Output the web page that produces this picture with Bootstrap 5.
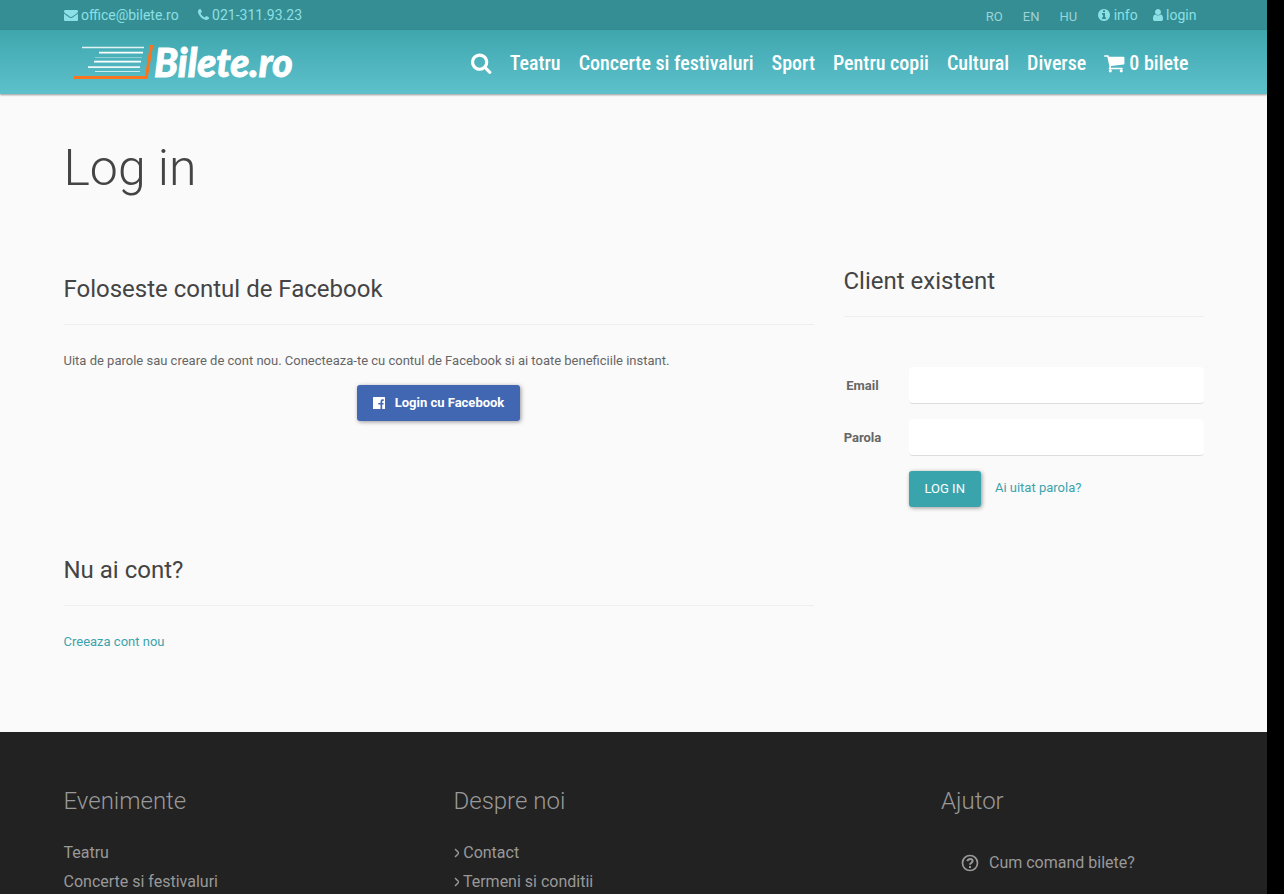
<!DOCTYPE html>
<html lang="ro">
<head>
<meta charset="utf-8">
<meta name="viewport" content="width=device-width, initial-scale=1">
<title>Log in - Bilete.ro</title>
<link href="https://cdn.jsdelivr.net/npm/bootstrap@5.3.0/dist/css/bootstrap.min.css" rel="stylesheet">
<style>
  body { background: #000; font: 400 13px/20px Roboto, sans-serif; color: #666; }
  a { color: #3aa4ad; text-decoration: none; }
  .site { background: #fafafa; margin-right: 17px; }
  .container { max-width: 1170px; --bs-gutter-x: 30px; }
  .row { --bs-gutter-x: 30px; }
  .fa { height: 1em; width: auto; fill: currentColor; vertical-align: -2px; }
  .topbar { background: #358e93; height: 30px; font-size: 14px; }
  .topbar a { color: #8be0e6; }
  .topbar .contact { gap: 19px; }
  .topbar .langs { gap: 20px; margin-right: 21px; }
  .topbar .account { gap: 15px; margin-right: 7px; }
  .topbar .langs a { color: #9cd3d6; font-size: 13px; }
  .mainbar { background: linear-gradient(#3fa6ae, #5dc1cb); height: 64px; box-shadow: 0 1px 2px rgba(0,0,0,.4); position: relative; padding-top: 2px; }
  .mainbar nav { margin-right: 6px; }
  .mainbar .nav-link { color: #fff; font: 500 20px/30px "Roboto Condensed", sans-serif; padding: 0 9px; }
  .mainbar .fa { height: 22px; vertical-align: -4px; }
  h1 { font-size: 50px; line-height: 60px; font-weight: 300; color: #444; padding-top: 44px; }
  h1.page-title { margin-bottom: 68px; }
  h2 { font-size: 24px; line-height: 30px; font-weight: 400; color: #444; padding-bottom: 20px; border-bottom: 1px solid #eee; margin: 0; }
  main { padding-bottom: 66px; }
  .left-col { padding-top: 8px; }
  section p { margin: 26px 0 14px; }
  .signup { margin-top: 134px; }
  .btn { font-size: 13px; line-height: 20px; padding: 8px 16px; border: 0; border-radius: 3px; color: #fff; box-shadow: 1px 1px 4px rgba(0,0,0,.4); }
  .btn-fb { display: inline-flex; align-items: center; gap: 10px; }
  .btn-fb, .btn-fb:hover { background: #4267b2; color: #fff; font-weight: 700; }
  .btn-login, .btn-login:hover { background: #3aa4ad; color: #fff; }
  .login-form { display: grid; grid-template-columns: 38px 1fr; column-gap: 27px; row-gap: 15px; align-items: center; margin-top: 50px; }
  .login-form label { font-weight: 700; text-align: center; }
  .login-form .form-control { height: 37px; border: 0; border-bottom: 1px solid #ddd; border-radius: 4px; background: #fff; font-size: 13px; }
  .forgot { margin-left: 14px; }
  footer { background: #222; font-size: 16px; line-height: 29px; color: #999; padding-top: 54px; }
  footer a { color: #999; }
  footer h3 { font-size: 24px; line-height: 30px; font-weight: 300; color: #999; margin-bottom: 22px; }
  .help { gap: 10px; padding: 10px 20px 0; }
</style>
</head>
<body>
<div class="site d-flex flex-column min-vh-100">
  <div class="topbar">
    <div class="container d-flex justify-content-between align-items-center h-100">
      <div class="d-flex contact">
        <a href="#"><svg class="fa" viewBox="0 0 1792 1792"><path d="M1792 710v794q0 66-47 113t-113 47h-1472q-66 0-113-47t-47-113v-794q44 49 101 87 362 246 497 345 57 42 92.500 65.500t94.500 48 110 24.500h2q51 0 110-24.500t94.500-48 92.500-65.500q170-123 498-345 57-39 100-87zm0-294q0 79-49 151t-122 123q-376 261-468 325-10 7-42.500 31t-54 38.500-52 32.500-57.500 27-50 9h-2q-23 0-50-9t-57.500-27-52-32.500-54-38.500-42.500-31q-91-64-262-182.500t-205-142.500q-62-42-117-115.500t-55-136.500q0-78 41.500-130t118.500-52h1472q65 0 112.500 47t47.500 113z"/></svg> office@bilete.ro</a>
        <a href="#"><svg class="fa" viewBox="192 0 1408 1792"><path d="M1600 1240q0 27-10 70.500t-21 68.500q-21 50-122 106-94 51-186 51-27 0-53-3.500t-57.500-12.500-47-14.500-55.500-20.500-49-18q-98-35-175-83-127-79-264-216t-216-264q-48-77-83-175-3-9-18-49t-20.500-55.500-14.500-47-12.500-57.500-3.500-53q0-92 51-186 56-101 106-122 25-11 68.500-21t70.500-10q14 0 21 3 18 6 53 76 11 19 30 54t35 63.500 31 53.500q3 4 17.500 25t21.500 35.500 7 28.500q0 20-28.500 50t-62 55-62 53-28.500 46q0 9 5 22.500t8.500 20.500 14 24 11.500 19q76 137 174 235t235 174q2 1 19 11.500t24 14 20.500 8.500 22.500 5q18 0 46-28.500t53-62 55-62 50-28.500q14 0 28.500 7t35.500 21.500 25 17.500q25 15 53.500 31t63.500 35 54 30q70 35 76 53 3 7 3 21z"/></svg> 021-311.93.23</a>
      </div>
      <div class="d-flex align-items-center">
        <div class="d-flex langs pt-1">
          <a href="#">RO</a><a href="#">EN</a><a href="#">HU</a>
        </div>
        <div class="d-flex account">
          <a href="#"><svg class="fa" viewBox="128 0 1536 1792"><path d="M1152 1376v-160q0-14-9-23t-23-9h-96v-512q0-14-9-23t-23-9h-320q-14 0-23 9t-9 23v160q0 14 9 23t23 9h96v320h-96q-14 0-23 9t-9 23v160q0 14 9 23t23 9h448q14 0 23-9t9-23zm-128-896v-160q0-14-9-23t-23-9h-192q-14 0-23 9t-9 23v160q0 14 9 23t23 9h192q14 0 23-9t9-23zm640 416q0 209-103 385.500t-279.500 279.500-385.500 103-385.500-103-279.500-279.500-103-385.500 103-385.500 279.500-279.500 385.500-103 385.500 103 279.500 279.500 103 385.500z"/></svg> info</a>
          <a href="#"><svg class="fa" viewBox="256 0 1280 1792"><path d="M1536 1399q0 109-62.500 187t-150.500 78h-854q-88 0-150.500-78t-62.500-187q0-85 8.500-160.500t31.500-152 58.500-131 94-89 134.500-34.500q131 128 313 128t313-128q76 0 134.500 34.500t94 89 58.500 131 31.500 152 8.500 160.500zm-256-887q0 159-112.500 271.500t-271.500 112.500-271.500-112.500-112.500-271.500 112.500-271.500 271.500-112.500 271.500 112.500 112.500 271.500z"/></svg> login</a>
        </div>
      </div>
    </div>
  </div>

  <header class="mainbar">
    <div class="container d-flex justify-content-between align-items-center h-100">
      <a href="#" aria-label="Bilete.ro" class="ms-2">
        <svg width="230" height="60" viewBox="72 33 230 60" class="d-block">
          <g stroke="#fff" fill="none">
            <path d="M82 47.500H144" stroke-width="1.500" opacity=".85"/><path d="M99 52.700H143" stroke-width="1.800"/>
            <path d="M95 57.500H142" opacity=".35"/><path d="M94 61.700H141" stroke-width="1.800"/>
            <path d="M88 67.200H140" stroke-width="1.800" opacity=".9"/><path d="M95 71.500H140" opacity=".7"/>
          </g>
          <path d="M150 45h3.300l-5.800 34H74v-3h71z" fill="#f9741c"/>
          <text x="154" y="77" fill="#fff" stroke="#fff" stroke-width=".9" font-family="Lato, sans-serif" font-weight="900" font-style="italic" font-size="39">Bilete.ro</text>
        </svg>
      </a>
      <nav class="d-flex flex-nowrap">
        <a class="nav-link" href="#" aria-label="Cauta"><svg class="fa" viewBox="64 0 1664 1792"><path d="M1216 832q0-185-131.500-316.500t-316.500-131.500-316.500 131.500-131.500 316.500 131.500 316.500 316.500 131.500 316.500-131.500 131.500-316.500zm512 832q0 52-38 90t-90 38q-54 0-90-38l-343-342q-179 124-399 124-143 0-273.500-55.500t-225-150-150-225-55.500-273.500 55.500-273.500 150-225 225-150 273.500-55.500 273.500 55.500 225 150 150 225 55.500 273.500q0 220-124 399l343 343q37 37 37 90z"/></svg></a>
        <a class="nav-link" href="#">Teatru</a>
        <a class="nav-link" href="#">Concerte si festivaluri</a>
        <a class="nav-link" href="#">Sport</a>
        <a class="nav-link" href="#">Pentru copii</a>
        <a class="nav-link" href="#">Cultural</a>
        <a class="nav-link" href="#">Diverse</a>
        <a class="nav-link" href="#"><svg class="fa" viewBox="64 0 1664 1792"><path d="M704 1536q0 52-38 90t-90 38-90-38-38-90 38-90 90-38 90 38 38 90zm896 0q0 52-38 90t-90 38-90-38-38-90 38-90 90-38 90 38 38 90zm128-1088v512q0 24-16.500 42.500t-40.500 21.500l-1044 122q13 60 13 70 0 16-24 64h920q26 0 45 19t19 45-19 45-45 19h-1024q-26 0-45-19t-19-45q0-11 8-31.500t16-36 21.500-40 15.500-29.500l-177-823h-204q-26 0-45-19t-19-45 19-45 45-19h256q16 0 28.500 6.500t19.500 15.500 13 24.500 8 26 5.500 29.500 4.500 26h1201q26 0 45 19t19 45z"/></svg> 0 bilete</a>
      </nav>
    </div>
  </header>

  <main class="container">
    <h1 class="page-title">Log in</h1>
    <div class="row">
      <div class="col-8 left-col">
        <section>
          <h2>Foloseste contul de Facebook</h2>
          <p>Uita de parole sau creare de cont nou. Conecteaza-te cu contul de Facebook si ai toate beneficiile instant.</p>
          <div class="d-flex justify-content-center">
            <button type="button" class="btn btn-fb"><svg width="12" height="12" viewBox="0 0 12 12"><path fill="#fff" fill-rule="evenodd" d="M.5 0h11q.5 0 .5.500v11q0 .5-.5.500H9.200V7.500h1.400V5.900H9.200V4.800q0-.9.800-.9h.7V2.300H9.500Q7.500 2.300 7.500 4.500v1.400H5.300v1.600h2.200V12h-7q-.5 0-.5-.5V.5Q0 0 .5 0z"/></svg>Login cu Facebook</button>
          </div>
        </section>
        <section class="signup">
          <h2>Nu ai cont?</h2>
          <p><a href="#">Creeaza cont nou</a></p>
        </section>
      </div>
      <div class="col-4">
        <h2>Client existent</h2>
        <form class="login-form">
          <label for="email">Email</label><input id="email" type="email" class="form-control">
          <label for="parola">Parola</label><input id="parola" type="password" class="form-control">
          <span></span>
          <div><button type="button" class="btn btn-login">LOG IN</button><a href="#" class="forgot">Ai uitat parola?</a></div>
        </form>
      </div>
    </div>
  </main>

  <footer class="flex-grow-1">
    <div class="container">
      <div class="row">
        <div class="col-4"><h3>Evenimente</h3>
          <a class="d-block" href="#">Teatru</a><a class="d-block" href="#">Concerte si festivaluri</a></div>
        <div class="col-5"><h3>Despre noi</h3>
          <a class="d-block" href="#"><svg class="fa" viewBox="583 28 600 1664"><path fill="none" d="M690 550L1100 960 690 1370" stroke="currentColor" stroke-width="150"/></svg> Contact</a>
          <a class="d-block" href="#"><svg class="fa" viewBox="583 28 600 1664"><path fill="none" d="M690 550L1100 960 690 1370" stroke="currentColor" stroke-width="150"/></svg> Termeni si conditii</a></div>
        <div class="col-3"><h3>Ajutor</h3>
          <a class="d-flex align-items-center help" href="#"><svg width="18" height="18" viewBox="0 0 18 18" fill="none" stroke="currentColor"><circle cx="9" cy="9" r="7.500" stroke-width="1.700"/><path d="M6.200 7.200Q7 4.900 9.100 4.900q2.500 0 2.500 2.100 0 1-1.300 1.800Q9 9.500 9 10.700" stroke-width="2"/><path d="M8 12h2v2H8z" fill="currentColor" stroke="none"/></svg>Cum comand bilete?</a></div>
      </div>
    </div>
  </footer>
</div>
<script src="https://cdn.jsdelivr.net/npm/bootstrap@5.3.0/dist/js/bootstrap.bundle.min.js"></script>
</body>
</html>
